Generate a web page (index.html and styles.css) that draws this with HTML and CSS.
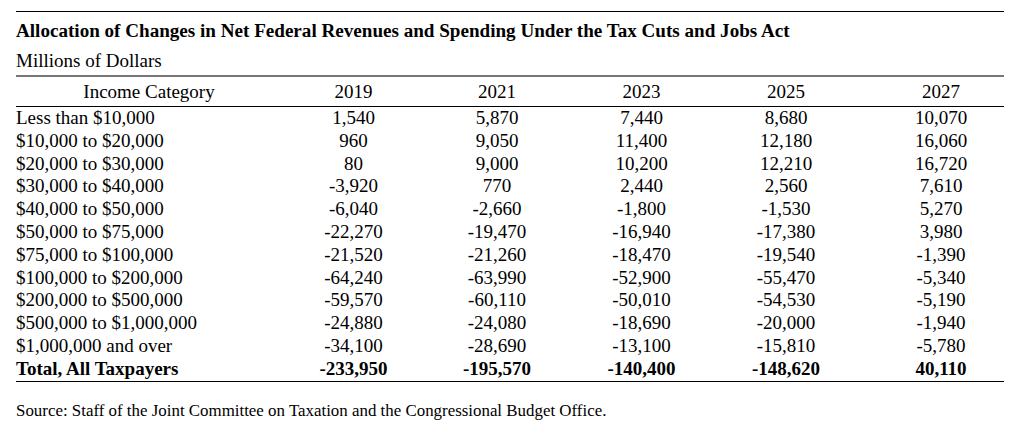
FILE: index.html
```html
<!DOCTYPE html>
<html lang="en">
<head>
<meta charset="utf-8">
<title>Allocation of Changes</title>
<link rel="stylesheet" href="styles.css">
</head>
<body>
<div class="figure">
  <div class="title">Allocation of Changes in Net Federal Revenues and Spending Under the Tax Cuts and Jobs Act</div>
  <div class="subtitle">Millions of Dollars</div>
  <table class="data">
    <colgroup>
      <col class="c-cat"><col class="c-yr"><col class="c-yr2"><col class="c-yr3"><col class="c-yr4"><col class="c-yr5">
    </colgroup>
    <thead>
      <tr><th>Income Category</th><th>2019</th><th>2021</th><th>2023</th><th>2025</th><th class="last">2027</th></tr>
    </thead>
    <tbody>
      <tr><td>Less than $10,000</td><td>1,540</td><td>5,870</td><td>7,440</td><td>8,680</td><td class="last">10,070</td></tr>
      <tr><td>$10,000 to $20,000</td><td>960</td><td>9,050</td><td>11,400</td><td>12,180</td><td class="last">16,060</td></tr>
      <tr><td>$20,000 to $30,000</td><td>80</td><td>9,000</td><td>10,200</td><td>12,210</td><td class="last">16,720</td></tr>
      <tr><td>$30,000 to $40,000</td><td>-3,920</td><td>770</td><td>2,440</td><td>2,560</td><td class="last">7,610</td></tr>
      <tr><td>$40,000 to $50,000</td><td>-6,040</td><td>-2,660</td><td>-1,800</td><td>-1,530</td><td class="last">5,270</td></tr>
      <tr><td>$50,000 to $75,000</td><td>-22,270</td><td>-19,470</td><td>-16,940</td><td>-17,380</td><td class="last">3,980</td></tr>
      <tr><td>$75,000 to $100,000</td><td>-21,520</td><td>-21,260</td><td>-18,470</td><td>-19,540</td><td class="last">-1,390</td></tr>
      <tr><td>$100,000 to $200,000</td><td>-64,240</td><td>-63,990</td><td>-52,900</td><td>-55,470</td><td class="last">-5,340</td></tr>
      <tr><td>$200,000 to $500,000</td><td>-59,570</td><td>-60,110</td><td>-50,010</td><td>-54,530</td><td class="last">-5,190</td></tr>
      <tr><td>$500,000 to $1,000,000</td><td>-24,880</td><td>-24,080</td><td>-18,690</td><td>-20,000</td><td class="last">-1,940</td></tr>
      <tr><td>$1,000,000 and over</td><td>-34,100</td><td>-28,690</td><td>-13,100</td><td>-15,810</td><td class="last">-5,780</td></tr>
      <tr class="total"><td>Total, All Taxpayers</td><td>-233,950</td><td>-195,570</td><td>-140,400</td><td>-148,620</td><td class="last">40,110</td></tr>
    </tbody>
  </table>
  <div class="source">Source: Staff of the Joint Committee on Taxation and the Congressional Budget Office.</div>
</div>
</body>
</html>
```

FILE: styles.css
```css
html, body {
  margin: 0;
  padding: 0;
  background: #ffffff;
}

body {
  font-family: "Liberation Serif", "Times New Roman", serif;
  color: #000000;
}

.figure {
  width: 988px;
  margin: 11px 0 0 16px;
  border-top: 1px solid #000000;
}

.title {
  font-weight: bold;
  font-size: 19.1px;
  line-height: 23px;
  padding-top: 7px;
  white-space: nowrap;
}

.subtitle {
  font-size: 19px;
  line-height: 23px;
  padding-top: 7px;
  padding-bottom: 3px;
}

.data {
  width: 988px;
  border-collapse: collapse;
  table-layout: fixed;
  border-top: 2px solid #777777;
  border-bottom: 1px solid #000000;
  font-size: 19px;
}

.c-cat { width: 266px; }
.c-yr { width: 143px; }
.c-yr2 { width: 144px; }
.c-yr3 { width: 145px; }
.c-yr4 { width: 144px; }
.c-yr5 { width: 146px; }

.data th {
  font-weight: normal;
  text-align: center;
  line-height: 23px;
  padding: 3px 0 3px 0;
  border-bottom: 1px solid #000000;
}

.data td {
  text-align: center;
  line-height: 22.8px;
  padding: 0;
  white-space: nowrap;
}

.data td:first-child {
  text-align: left;
}

.data .last {
  padding-left: 20px;
}

.data .total td {
  font-weight: bold;
}

.source {
  font-size: 16.9px;
  line-height: 20px;
  padding-top: 19px;
  white-space: nowrap;
}
```
